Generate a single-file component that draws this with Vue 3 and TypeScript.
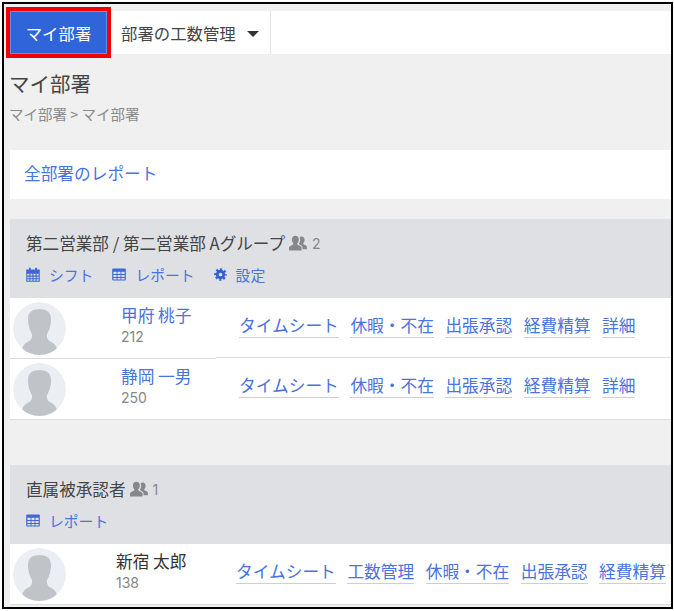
<script setup lang="ts">
interface Member { name: string; count: string }
interface Section {
  kind: string
  title: string
  total: string
  actions: { icon: string; label: string }[]
  members: Member[]
  links: string[]
  plain: boolean
}
const sections: Section[] = [
  {
    kind: 'first',
    title: '第二営業部 / 第二営業部 Aグループ',
    total: '2',
    actions: [
      { icon: 'calendar', label: 'シフト' },
      { icon: 'table', label: 'レポート' },
      { icon: 'gear', label: '設定' }
    ],
    members: [
      { name: '甲府 桃子', count: '212' },
      { name: '静岡 一男', count: '250' }
    ],
    links: ['タイムシート', '休暇・不在', '出張承認', '経費精算', '詳細'],
    plain: false
  },
  {
    kind: 'second',
    title: '直属被承認者',
    total: '1',
    actions: [{ icon: 'table', label: 'レポート' }],
    members: [{ name: '新宿 太郎', count: '138' }],
    links: ['タイムシート', '工数管理', '休暇・不在', '出張承認', '経費精算'],
    plain: true
  }
]
</script>

<template>
  <div class="page">
    <div class="frame">
      <nav class="nav">
        <a class="nav-active">マイ部署</a>
        <a class="nav-item">部署の工数管理<span class="caret"></span></a>
      </nav>
      <h1 class="title">マイ部署</h1>
      <div class="crumb">マイ部署 &gt; マイ部署</div>
      <div class="card"><a class="link">全部署のレポート</a></div>

      <section v-for="s in sections" :key="s.kind" class="section" :class="s.kind">
        <header class="head">
          <div class="head-title">
            <span>{{ s.title }}</span>
            <svg class="users" viewBox="0 0 18 16" width="18" height="16">
              <path fill="#85878a" d="M12.6 1.6c1.9 0 3 1.5 3 3.3 0 1.3-.6 2.6-1.4 3.2-.2.7.1 1.1.7 1.4 1.300.5 2.700 1 3 2.200v2.500h-4.300v-1.500c0-1.800-1.600-2.700-3.300-3.500-.3-.2-.4-.5-.3-.8.900-.9 1.200-2 1.200-3.300 0-1-.2-2-.7-2.700.5-.5 1.200-.8 2.100-.8z" />
              <path fill="#85878a" d="M6.400.8c2.100 0 3.400 1.700 3.400 3.800 0 1.500-.6 3-1.500 3.700-.3.8.1 1.300.8 1.600 1.500.7 3.300 1.300 3.500 2.600v3H0v-3c.2-1.300 2-1.900 3.500-2.600.7-.3 1.100-.8.8-1.600C3.500 7.600 2.900 6.100 2.900 4.600 2.900 2.500 4.300.8 6.400.8z" />
            </svg>
            <span class="total">{{ s.total }}</span>
          </div>
          <div class="actions">
            <a v-for="a in s.actions" :key="a.label" class="action">
              <svg v-if="a.icon === 'calendar'" class="ico" viewBox="0 0 14 15" width="14" height="15">
                <path fill="none" stroke="#3f68d6" stroke-width="1.100" d="M.8 3h12.400v11.300H.8zM.8 6.300h12.400M.8 9.100h12.400M.8 11.800h12.400M3.900 6.300v8M7 6.300v8M10.100 6.300v8" />
                <path fill="#3f68d6" d="M.8 3h12.400v3.300H.8zM3 .8h1.800v3.400H3zM9.200.8H11v3.400H9.200z" />
              </svg>
              <svg v-else-if="a.icon === 'table'" class="ico" viewBox="0 0 14 13" width="14" height="13">
                <rect x="0.200" y="0.400" width="13.600" height="12.200" rx="1" fill="#3f68d6" />
                <path fill="#dfe0e3" d="M1.400 3.800h3.200v2.200H1.400zM5.500 3.800h3v2.200h-3zM9.400 3.800h3.200v2.200H9.400zM1.400 7h3.200v2.100H1.400zM5.500 7h3v2.100h-3zM9.400 7h3.200v2.100H9.400zM1.400 10h3.200v1.500H1.400zM5.500 10h3v1.500h-3zM9.400 10h3.200v1.500H9.400z" />
              </svg>
              <svg v-else class="ico" viewBox="0 0 14 14" width="13" height="13">
                <circle cx="7" cy="7" r="3.500" fill="none" stroke="#2f5fd4" stroke-width="3" />
                <circle cx="7" cy="7" r="5.600" fill="none" stroke="#2f5fd4" stroke-width="2.400" stroke-dasharray="2.200 2.198" stroke-dashoffset="1.100" />
              </svg>
              <span>{{ a.label }}</span>
            </a>
          </div>
        </header>
        <div v-for="m in s.members" :key="m.name" class="row">
          <div class="who">
            <svg class="avatar" viewBox="0 0 53 53" width="53" height="53">
              <circle cx="26.500" cy="26.500" r="26.500" fill="#ebeef2" />
              <path fill="#c0c4c9" d="M26.500 7C34 7 38 10.500 38 17C38 21.500 37.200 25 36 28C35.100 30.200 33.800 31.600 33.800 33.800C33.800 36.300 35.300 38.800 38 39.800C41 41.100 43 43.300 44 47.300V53H9V47.300C10 43.300 12 41.100 15 39.800C17.700 38.800 19.200 36.300 19.200 33.800C19.200 31.600 17.900 30.200 17 28C15.800 25 15 21.500 15 17C15 10.500 19 7 26.500 7Z" />
            </svg>
            <div class="person">
              <div class="name" :class="{ plain: s.plain }">{{ m.name }}</div>
              <div class="count">{{ m.count }}</div>
            </div>
          </div>
          <div class="links">
            <a v-for="l in s.links" :key="l" class="link under">{{ l }}</a>
          </div>
        </div>
      </section>
    </div>
  </div>
</template>

<style>
html, body { margin: 0; background: #fff; }
</style>

<style scoped>
.page {
  width: 674px;
  height: 611px;
  padding: 2px 1px 2px 2px;
  box-sizing: border-box;
  background: #fff;
  font-family: "Noto Sans CJK JP", "Inter", sans-serif;
  overflow: hidden;
}
.frame {
  height: 607px;
  box-sizing: border-box;
  border: 2px solid #000;
  background: #f0f0f0;
  padding: 7px 0 0 6px;
  overflow: hidden;
}
.nav {
  display: flex;
  height: 43px;
  background: #fff;
}
.nav-active {
  position: relative;
  width: 97px;
  display: flex;
  align-items: center;
  justify-content: center;
  background: #2f65d8;
  color: #fff;
  font-size: 16.400px;
  box-shadow: inset 0 0 0 1px #6a8fe2, 0 0 0 4px #f00000;
}
.nav-item {
  display: flex;
  align-items: center;
  width: 164px;
  box-sizing: border-box;
  padding-left: 14px;
  border-right: 1px solid #e6e6e6;
  color: #444;
  font-size: 16.400px;
}
.caret {
  width: 0;
  height: 0;
  margin: 3px 0 0 11px;
  border-left: 6px solid transparent;
  border-right: 6px solid transparent;
  border-top: 6px solid #333;
}
.title {
  margin: 15px 0 0 -1px;
  font-size: 20.500px;
  line-height: 28px;
  font-weight: 400;
  color: #444;
}
.crumb {
  margin: 7px 0 0 -1px;
  font-size: 14.500px;
  line-height: 20px;
  color: #8b8b8b;
}
.card {
  margin-top: 26px;
  height: 49px;
  box-sizing: border-box;
  padding: 0 0 4px 14px;
  display: flex;
  align-items: center;
  background: #fff;
}
.link {
  color: #4a72e0;
  font-size: 16.700px;
}
.section.first { margin-top: 20px; }
.section.second { margin-top: 45px; }
.head {
  height: 79px;
  box-sizing: border-box;
  padding: 12px 0 0 16px;
  background: #dfe0e3;
}
.head-title {
  display: flex;
  align-items: center;
  height: 24px;
  font-size: 16.600px;
  color: #444;
}
.users { margin-left: 4px; }
.total {
  margin-left: 5px;
  font-size: 14px;
  color: #85878a;
  font-family: "Inter", sans-serif;
}
.actions {
  display: flex;
  gap: 19px;
  margin-top: 8px;
  height: 22px;
  align-items: center;
}
.action {
  display: flex;
  align-items: center;
  gap: 9px;
  color: #4a72e0;
  font-size: 14.800px;
}
.row {
  display: flex;
  align-items: flex-start;
  background: #fff;
}
.who {
  flex: none;
  width: 206px;
  height: 61px;
  box-sizing: border-box;
  display: flex;
  align-items: center;
  padding-left: 3px;
  border-bottom: 1px solid #dcdcdc;
}
.avatar {
  flex: none;
  border-radius: 50%;
}
.person {
  margin-left: 55px;
  padding-bottom: 5px;
}
.second .person { margin-left: 50px; }
.name {
  font-size: 16.700px;
  line-height: 23px;
  color: #4a72e0;
}
.name.plain { color: #333; }
.count {
  font-size: 14px;
  line-height: 20px;
  color: #85878a;
  font-family: "Inter", sans-serif;
}
.links {
  flex: 1;
  height: 60px;
  box-sizing: border-box;
  display: flex;
  gap: 11.600px;
  padding: 15px 0 0 23px;
  border-bottom: 1px solid #dcdcdc;
}
.row:first-of-type .links { padding-top: 16px; }
.first .row:last-child .links { height: 61px; }
.second .links { padding-left: 20px; height: 61px; }
.under {
  height: 23px;
  line-height: 23px;
  white-space: nowrap;
  border-bottom: 1px solid #cfcfcf;
}
</style>
